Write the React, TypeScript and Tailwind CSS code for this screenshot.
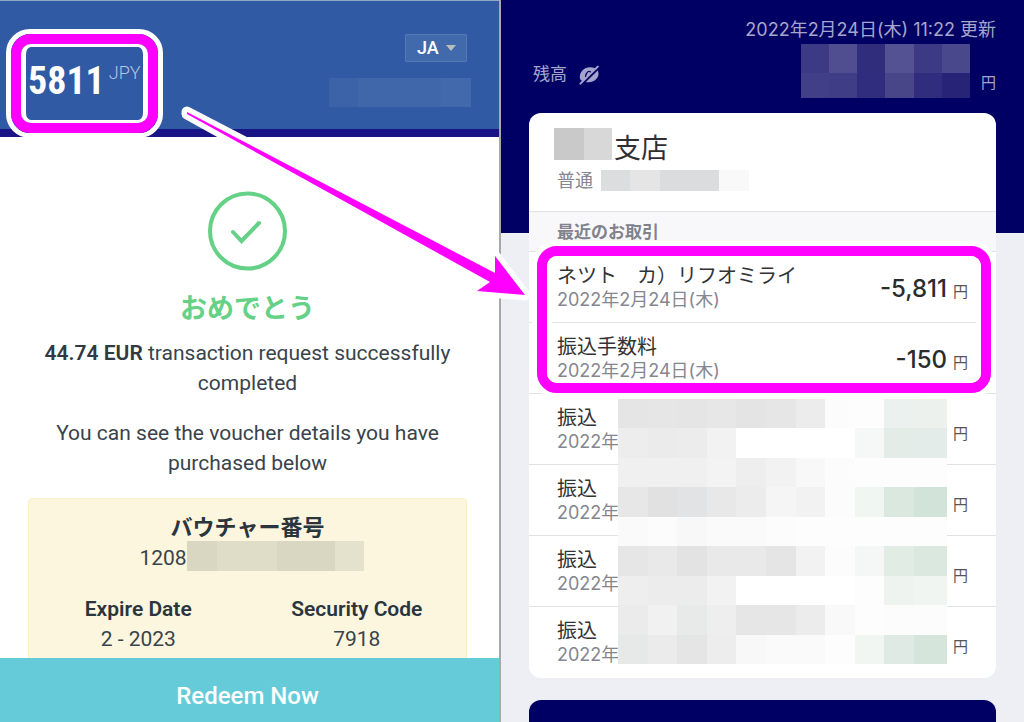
import React from "react";

interface ITransaction {
    title: string,
    date: string,
    amount?: string
}

const transactions: ITransaction[] = [
    { title: "ネツト　カ）リフオミライ", date: "2022年2月24日(木)", amount: "-5,811" },
    { title: "振込手数料", date: "2022年2月24日(木)", amount: "-150" },
    { title: "振込", date: "2022年" },
    { title: "振込", date: "2022年" },
    { title: "振込", date: "2022年" },
    { title: "振込", date: "2022年" },
]

// colours of the pixelated blocks, row by row
const balanceMask = [
    "bg-[#3c3a84]", "bg-[#504e90]", "bg-[#302d7c]", "bg-[#545292]", "bg-[#3c3a84]", "bg-[#4a488c]",
    "bg-[#413f87]", "bg-[#3f3d86]", "bg-[#302d7e]", "bg-[#484689]", "bg-[#302d7e]", "bg-[#272477]",
]

const listMask = [
    "bg-[#e5e5e5]", "bg-[#e6e6e6]", "bg-[#e5e5e5]", "bg-[#e7e7e7]", "bg-[#e4e4e4]", "bg-[#e6e6e6]", "bg-[#ececec]", "bg-[#fcfcfc]", "bg-[#fcfdfc]", "bg-[#ebf1ee]", "bg-[#ecf1ee]",
    "bg-[#ededed]", "bg-[#ebebeb]", "bg-[#ececec]", "bg-[#f2f2f2]", "bg-white", "bg-white", "bg-white", "bg-white", "bg-[#f5f8f6]", "bg-[#e3ece7]", "bg-[#e3ece8]",
    "bg-[#f0f0f0]", "bg-[#f0f0f0]", "bg-[#f0f0f0]", "bg-[#f3f3f3]", "bg-[#eeeeee]", "bg-[#f2f2f2]", "bg-[#f8f8f8]", "bg-[#fcfcfc]", "bg-[#fdfdfd]", "bg-[#fdfdfd]", "bg-[#fdfdfd]",
    "bg-[#e7e7e7]", "bg-[#e1e1e1]", "bg-[#e2e3e4]", "bg-[#e8e8e8]", "bg-[#ececec]", "bg-[#f5f5f5]", "bg-[#f2f2f2]", "bg-[#fcfcfc]", "bg-[#f0f6f2]", "bg-[#dbe8e0]", "bg-[#d2e4d9]",
    "bg-[#fafafa]", "bg-[#fcfcfc]", "bg-[#f8f8f8]", "bg-[#fafafa]", "bg-[#fafafa]", "bg-[#fcfcfc]", "bg-[#fdfdfd]", "bg-[#fdfdfd]", "bg-[#fdfdfd]", "bg-[#fdfdfd]", "bg-[#fdfdfd]",
    "bg-[#e6e6e6]", "bg-[#e9e9e9]", "bg-[#e3e3e3]", "bg-[#e9e9e9]", "bg-[#e9e9e9]", "bg-[#e5e5e5]", "bg-[#f2f2f2]", "bg-[#fcfcfc]", "bg-[#f4f7f5]", "bg-[#e1ece5]", "bg-[#dae8df]",
    "bg-[#eeeeee]", "bg-[#ececec]", "bg-[#ececec]", "bg-[#f2f2f2]", "bg-white", "bg-white", "bg-white", "bg-white", "bg-[#fdfdfd]", "bg-[#eef3f0]", "bg-[#f0f5f2]",
    "bg-[#ebebeb]", "bg-[#f0f1f0]", "bg-[#e8e9e9]", "bg-[#eeeeee]", "bg-[#e6e6e6]", "bg-[#e6e6e6]", "bg-[#ececec]", "bg-[#f9f9f9]", "bg-[#fdfdfd]", "bg-[#fcfcfc]", "bg-[#fbfcfb]",
    "bg-[#e7e9e8]", "bg-[#ebebeb]", "bg-[#e5e5e5]", "bg-[#ededed]", "bg-[#f8f8f8]", "bg-[#fafafa]", "bg-[#fafafa]", "bg-[#fdfdfd]", "bg-[#f1f6f3]", "bg-[#dfeae4]", "bg-[#d6e5dc]",
]

function HiddenEyeIcon() {
    return (
        <svg viewBox="0 0 20 20" className="h-5 w-5" aria-hidden="true">
            <path fill="#a3a3cc" d="M0.800 12.500C0.800 6.500 5 2.500 11 2.300C14.500 2.200 17.500 3.500 19 6C20.300 9.500 19 12.500 16.800 14.600C14 17.300 10.500 17.800 6.500 17C3 16.500 0.800 15 0.800 12.500Z" />
            <ellipse cx="9.200" cy="9.400" rx="1.900" ry="3.400" transform="rotate(32 9.200 9.400)" fill="none" stroke="#000064" strokeWidth="1.200" />
            <path d="M2.500 19.300L20 2.200" stroke="#000064" strokeWidth="2.800" />
            <path d="M1.400 18.600L18.800 1.600" stroke="#a3a3cc" strokeWidth="2" strokeLinecap="round" />
        </svg>
    )
}

function Highlight() {
    return (
        <div className="h-full rounded-[24px] border-[5px] border-white">
            <div className="h-full rounded-[20px] border-10 border-[#ff00ff]">
                <div className="h-full rounded-[10px] border-x-[5px] border-y-[3px] border-white"></div>
            </div>
        </div>
    )
}

function TransactionRow({ item }: { item: ITransaction }) {
    return (
        <li className="flex items-center justify-between border-t border-[#e2e2e5] pb-[10px] pl-7 pr-7 pt-3">
            <div>
                <p className="text-xl/6 text-[#333336]">{item.title}</p>
                <p className="text-lg/6 text-[#85868f]">{item.date}</p>
            </div>
            <p className="flex items-end gap-[6px] pt-1 text-[#2b2b2e]">
                <span className="h-[27px] text-2xl/6 font-medium">{item.amount}</span>
                <span className="text-[15px]/6 text-[#555558]">円</span>
            </p>
        </li>
    )
}

function VoucherPane() {
    return (
        <section className="flex h-screen flex-col overflow-hidden border-r-2 border-[#a8a8a8] bg-white font-[Roboto,'Noto_Sans_CJK_JP',sans-serif] text-[#39434b]">
            <header className="flex h-[137px] shrink-0 items-start justify-between border-t border-b-8 border-t-[#8fa9c4] border-b-[#1b1487] bg-[#305aa4] pr-7">
                <div className="relative ml-[6px] mt-7 h-[109px] w-[157px]">
                    <p className="flex items-start pl-[22px] pt-[30px] text-white">
                        <span className="font-['Liberation_Sans_Narrow','Roboto_Condensed',Roboto,sans-serif] text-[38px]/[44px] font-bold">5811</span>
                        <span className="pl-1 text-lg/7 font-light text-[#b4c5e2]">JPY</span>
                    </p>
                    <div className="absolute inset-0"><Highlight /></div>
                </div>
                <div className="flex flex-col items-end pt-[33px]">
                    <div className="relative mr-1">
                        <select aria-label="Language" className="h-7 w-[62px] appearance-none rounded-[1px] border border-[#5579b5] bg-[#416aad] pl-[11px] text-lg/6 font-medium text-white">
                            <option>JA</option>
                        </select>
                        <svg viewBox="0 0 10 6" className="pointer-events-none absolute right-[11px] top-[11px] h-[6px] w-[10px]" aria-hidden="true">
                            <path d="M0 0H10L5 6Z" fill="#b9bdbd" />
                        </svg>
                    </div>
                    <div className="mt-4 flex h-[29px] w-[142px]">
                        <div className="w-[29px] bg-[#3c63a8]"></div>
                        <div className="grow bg-[#4067aa]"></div>
                        <div className="w-[30px] bg-[#4269ac]"></div>
                    </div>
                </div>
            </header>
            <main className="min-h-0 grow overflow-hidden pl-7 pr-8 pt-[54px] text-center text-[21px]/[30px]">
                <svg viewBox="0 0 80 80" className="mx-auto h-20 w-20" fill="none" stroke="#65d186" strokeWidth="4" aria-hidden="true">
                    <circle cx="39.500" cy="40" r="37.500" />
                    <path d="M25 41L33.500 50L51 32" strokeLinecap="round" />
                </svg>
                <h1 className="mt-[22px] text-[27px]/8 font-bold text-[#65d186]">おめでとう</h1>
                <p className="mt-[13px]"><strong className="font-semibold text-[#2f3a42]">44.74 EUR</strong> transaction request successfully completed</p>
                <p className="mt-5 px-4">You can see the voucher details you have purchased below</p>
                <div className="mt-5 rounded-[4px] border border-[#faf0c8] bg-[#fdf6df] pb-5 pt-[14px]">
                    <h2 className="text-[22px]/[30px] font-bold text-[#2b353d]">バウチャー番号</h2>
                    <div className="flex items-start justify-center pl-2">
                        <span>1208</span>
                        <div className="-mt-0.5 flex h-[30px] w-[177px]">
                            <div className="w-[30px] bg-[#d9d6c2]"></div>
                            <div className="w-[60px] bg-[#dfdcc8]"></div>
                            <div className="grow bg-[#d9d6c2]"></div>
                            <div className="w-[29px] bg-[#e4e1cc]"></div>
                        </div>
                    </div>
                    <dl className="mt-[21px] grid grid-cols-2">
                        <div>
                            <dt className="font-semibold text-[#2b353d]">Expire Date</dt>
                            <dd>2 - 2023</dd>
                        </div>
                        <div>
                            <dt className="font-semibold text-[#2b353d]">Security Code</dt>
                            <dd>7918</dd>
                        </div>
                    </dl>
                </div>
            </main>
            <button className="h-16 shrink-0 bg-[#66cbd8] pl-7 pr-8 pt-3 text-2xl font-medium text-white">Redeem Now</button>
        </section>
    )
}

function BankPane() {
    return (
        <section className="h-screen overflow-hidden bg-[linear-gradient(#000064_233px,#eeeff5_233px)] px-7 font-[Inter,'Noto_Sans_CJK_JP',sans-serif]">
            <header className="pb-[15px] pt-[18px] text-[#a6a6cc]">
                <p className="text-right text-lg/6">2022年2月24日(木) 11:22 更新</p>
                <div className="mt-[2px] flex items-end">
                    <span className="pb-3 pl-1 text-[17px]/6">残高</span>
                    <button aria-label="残高を隠す" className="pb-[13px] pl-3"><HiddenEyeIcon /></button>
                    <div className="ml-auto grid h-[54px] w-[169px] grid-cols-6 grid-rows-[29px_25px]">
                        {balanceMask.map((color, i) => <div key={i} className={color}></div>)}
                    </div>
                    <span className="pb-[3px] pl-[11px] text-[15px]/6">円</span>
                </div>
            </header>
            <article className="rounded-xl bg-white pb-px">
                <div className="pb-5 pl-[25px] pt-[15px]">
                    <h2 className="flex items-start text-[27px]/[42px] text-[#2f2f32]">
                        <span className="mr-[2px] flex h-8 w-[58px]">
                            <span className="w-[30px] bg-[#c9c9c9]"></span>
                            <span className="grow bg-[#d8d8d8]"></span>
                        </span>
                        支店
                    </h2>
                    <p className="flex items-center pl-[3px] text-lg/5 text-[#85868f]">
                        普通
                        <span className="ml-2 flex h-[21px]">
                            <span className="w-[29px] bg-[#dcddde]"></span>
                            <span className="w-[30px] bg-[#e5e5e5]"></span>
                            <span className="w-[59px] bg-[#dadcde]"></span>
                            <span className="w-[30px] bg-[#f9f9f9]"></span>
                        </span>
                    </p>
                </div>
                <h3 className="border-t border-[#e2e2e5] bg-[#f8f8fb] pb-[7px] pl-7 pt-2 text-[17px]/6 font-bold text-[#80828c]">最近のお取引</h3>
                <div className="relative">
                    <ul>
                        {transactions.map((item, i) => <TransactionRow key={i} item={item} />)}
                    </ul>
                    <div className="absolute left-[89px] right-[49px] top-[148px] grid h-[265px] grid-cols-[repeat(10,9fr)_10fr] grid-rows-9">
                        {listMask.map((color, i) => <div key={i} className={color}></div>)}
                    </div>
                    <div className="absolute -top-[10px] left-[3px] right-0 h-[157px]"><Highlight /></div>
                </div>
            </article>
            <div className="mt-[22px] h-20 rounded-xl bg-[#000064]"></div>
        </section>
    )
}

export default function App() {
    return (
        <div className="relative grid grid-cols-[501fr_523fr] overflow-hidden">
            <VoucherPane />
            <BankPane />
            {/* arrow from the voucher amount to the bank entry */}
            <svg viewBox="175 100 360 205" className="absolute left-[175px] top-[100px] h-[205px] w-[360px]" aria-hidden="true">
                <path d="M187 112L495 273V256L525 295L477 291L490 282L187 114Z" fill="none" stroke="#fff" strokeWidth="11" strokeLinejoin="round" />
                <path d="M187 112L495 273V256L525 295L477 291L490 282L187 114Z" fill="#ff00ff" />
            </svg>
        </div>
    )
}
